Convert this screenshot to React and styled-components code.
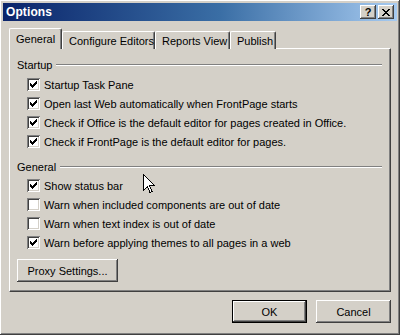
import React from "react";
import styled, { createGlobalStyle } from "styled-components";

const GlobalStyle = createGlobalStyle`
  html, body {
    margin: 0;
    padding: 0;
    background: #d4d0c8;
  }
  * {
    box-sizing: border-box;
  }
`;

const raised = `
  box-shadow: inset -1px -1px #404040, inset 1px 1px #ffffff,
    inset -2px -2px #808080, inset 2px 2px #d4d0c8;
`;

const Window = styled.div`
  position: relative;
  width: 400px;
  height: 335px;
  padding: 3px;
  background: #d4d0c8;
  font-family: Tahoma, "Liberation Sans", Arial, sans-serif;
  font-size: 11px;
  color: #000;
  display: flex;
  flex-direction: column;
  ${raised}
`;

const TitleBar = styled.div`
  height: 18px;
  display: flex;
  align-items: center;
  justify-content: space-between;
  padding: 0 3px 0 3px;
  background: linear-gradient(to right, #0a246a 0%, #3a6ea5 55%, #a6caf0 100%);
`;

const Title = styled.span`
  color: #fff;
  font-weight: bold;
  font-size: 12px;
  letter-spacing: 0.1px;
`;

const TitleButtons = styled.div`
  display: flex;
  gap: 2px;
`;

const CaptionButton = styled.div`
  width: 16px;
  height: 14px;
  background: #d4d0c8;
  display: flex;
  align-items: center;
  justify-content: center;
  font-weight: bold;
  font-size: 11px;
  line-height: 1;
  ${raised}
`;

const Body = styled.div`
  flex: 1;
  display: flex;
  flex-direction: column;
  padding: 8px 6px 0 6px;
`;

const TabRow = styled.div`
  display: flex;
  align-items: flex-end;
  height: 20px;
  position: relative;
  z-index: 1;
  margin-bottom: -1px;
`;

const Tab = styled.div`
  height: ${(p) => (p.$active ? "21px" : "18px")};
  width: ${(p) => p.$w}px;
  padding: ${(p) => (p.$active ? "4px 0 0 6px" : "3px 0 0 6px")};
  background: #d4d0c8;
  border-top: 1px solid #fff;
  border-left: 1px solid #fff;
  border-right: 1px solid #404040;
  box-shadow: inset -1px 0 #808080;
  border-radius: 2px 2px 0 0;
  white-space: nowrap;
`;

const Panel = styled.div`
  width: 382px;
  height: 244px;
  border-top: 1px solid #fff;
  border-left: 1px solid #fff;
  border-right: 1px solid #404040;
  border-bottom: 1px solid #404040;
  box-shadow: inset -1px -1px #808080;
  padding: 9px 8px 0 7px;
  display: flex;
  flex-direction: column;
`;

const GroupHeader = styled.div`
  display: flex;
  align-items: center;
  height: 13px;
  margin-top: ${(p) => p.$top || 0}px;
  margin-bottom: ${(p) => p.$bottom ?? 4}px;
`;

const GroupLine = styled.div`
  flex: 1;
  margin-left: 4px;
  margin-top: 1px;
  border-top: 1px solid #808080;
  border-bottom: 1px solid #fff;
`;

const Row = styled.div`
  display: flex;
  align-items: center;
  height: 19px;
  padding-left: 10px;
  white-space: nowrap;
`;

const Box = styled.div`
  width: 13px;
  height: 13px;
  background: #fff;
  margin-right: 4px;
  flex-shrink: 0;
  position: relative;
  box-shadow: inset 1px 1px #808080, inset -1px -1px #ffffff,
    inset 2px 2px #404040, inset -2px -2px #d4d0c8;
  svg {
    position: absolute;
    left: 3px;
    top: 3px;
  }
`;

const Button = styled.div`
  width: ${(p) => p.$w}px;
  height: 23px;
  display: flex;
  align-items: center;
  justify-content: center;
  background: #d4d0c8;
  ${raised}
  ${(p) =>
    p.$default &&
    `
    box-shadow: inset 0 0 0 1px #000, inset -2px -2px #404040, inset 2px 2px #ffffff,
      inset -3px -3px #808080;
  `}
`;

const ProxyButton = styled(Button)`
  margin-top: 7px;
`;

const Footer = styled.div`
  display: flex;
  justify-content: flex-end;
  gap: 9px;
  padding-top: 8px;
`;

const Cursor = styled.svg`
  position: absolute;
  left: 143px;
  top: 174px;
`;

const Check = () => (
  <svg width="7" height="7" shapeRendering="crispEdges">
    {[2, 3, 4, 3, 2, 1, 0].map((y, x) => (
      <rect key={x} x={x} y={y} width="1" height="3" fill="#000" />
    ))}
  </svg>
);

const CheckRow = ({ checked, children }) => (
  <Row>
    <Box>{checked && <Check />}</Box>
    <span>{children}</span>
  </Row>
);

const startup = [
  "Startup Task Pane",
  "Open last Web automatically when FrontPage starts",
  "Check if Office is the default editor for pages created in Office.",
  "Check if FrontPage is the default editor for pages.",
];

const general = [
  ["Show status bar", true],
  ["Warn when included components are out of date", false],
  ["Warn when text index is out of date", false],
  ["Warn before applying themes to all pages in a web", true],
];

const tabs = [
  ["General", 53],
  ["Configure Editors", 93],
  ["Reports View", 75],
  ["Publish", 46],
];

export default function App() {
  return (
    <>
      <GlobalStyle />
      <Window>
        <TitleBar>
          <Title>Options</Title>
          <TitleButtons>
            <CaptionButton>?</CaptionButton>
            <CaptionButton>
              <svg width="8" height="7" shapeRendering="crispEdges">
                <path d="M0 0h2l2 2.5 2-2.5h2l-3 3.5 3 3.5h-2l-2-2.5-2 2.5h-2l3-3.5z" fill="#000" />
              </svg>
            </CaptionButton>
          </TitleButtons>
        </TitleBar>
        <Body>
          <TabRow>
            {tabs.map(([t, w], i) => (
              <Tab key={t} $active={i === 0} $w={w}>
                {t}
              </Tab>
            ))}
          </TabRow>
          <Panel>
            <GroupHeader>
              Startup
              <GroupLine />
            </GroupHeader>
            {startup.map((t) => (
              <CheckRow key={t} checked>
                {t}
              </CheckRow>
            ))}
            <GroupHeader $top={9} $bottom={3}>
              General
              <GroupLine />
            </GroupHeader>
            {general.map(([t, c]) => (
              <CheckRow key={t} checked={c}>
                {t}
              </CheckRow>
            ))}
            <ProxyButton $w={101}>Proxy Settings...</ProxyButton>
          </Panel>
          <Footer>
            <Button $w={75} $default>
              OK
            </Button>
            <Button $w={75}>Cancel</Button>
          </Footer>
        </Body>
        <Cursor width="12" height="20" viewBox="0 0 12 20" shapeRendering="crispEdges">
          <path
            d="M0.5 0.5 L0.5 16.5 L4.5 12.5 L7 18.5 L9 17.5 L6.5 11.5 L11.5 11.5 Z"
            fill="#fff"
            stroke="#000"
            strokeWidth="1"
          />
        </Cursor>
      </Window>
    </>
  );
}
